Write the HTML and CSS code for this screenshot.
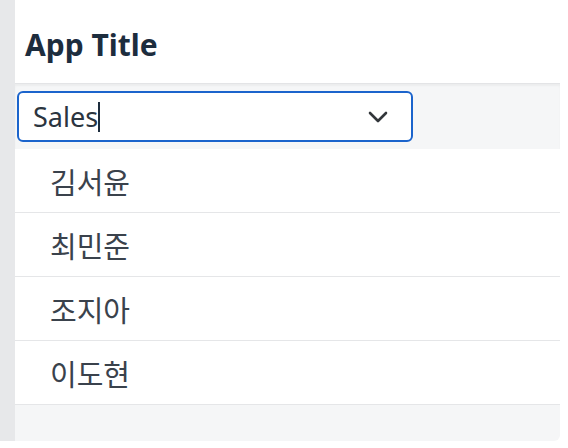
FILE: index.html
```html
<!DOCTYPE html>
<html lang="ko">
<head>
    <meta charset="UTF-8">
    <meta name="viewport" content="width=device-width, initial-scale=1.0">
    <title>App Title</title>
    <link rel="stylesheet" href="styles.css">
</head>
<body>
    <div class="shell">
        <div class="side"></div>
        <div class="panel">
            <header class="header">
                <h1 class="title">App Title</h1>
            </header>
            <div class="toolbar">
                <div class="select">
                    <span class="select-value">Sales<span class="caret"></span></span>
                    <svg class="chevron" width="20" height="12" viewBox="0 0 20 12">
                        <path d="M2 2 L10 10 L18 2" fill="none" stroke="#32363a" stroke-width="2.6" stroke-linecap="round" stroke-linejoin="round"/>
                    </svg>
                </div>
            </div>
            <ul class="list">
                <li class="item">김서윤</li>
                <li class="item">최민준</li>
                <li class="item">조지아</li>
                <li class="item">이도현</li>
            </ul>
            <div class="footer"></div>
        </div>
    </div>
</body>
</html>
```

FILE: styles.css
```css
body {
    margin: 0;
    background: #fff;
    font-family: 'Noto Sans', 'Noto Sans CJK KR', sans-serif;
    color: #32363a;
}
.shell {
    display: flex;
    width: 560px;
    height: 441px;
}
.side {
    width: 15px;
    background: #e7e8ea;
}
.panel {
    flex: 1;
    display: flex;
    flex-direction: column;
    background: #fff;
    border-bottom-right-radius: 6px;
    overflow: hidden;
}
.header {
    height: 84px;
    display: flex;
    align-items: center;
    padding: 5px 0 0 10px;
    box-sizing: border-box;
    border-bottom: 1px solid #e3e4e6;
}
.title {
    margin: 0;
    font-size: 30px;
    font-weight: 700;
    color: #1d2d3e;
}
.toolbar {
    height: 65px;
    background: #f5f6f7;
    padding: 7px 0 0 2px;
    box-sizing: border-box;
    box-shadow: inset 0 2px 2px rgba(0, 0, 0, 0.04);
}
.select {
    width: 396px;
    height: 51px;
    box-sizing: border-box;
    border: 2.5px solid #1b64cc;
    border-radius: 6px;
    background: #fff;
    display: flex;
    align-items: center;
    justify-content: space-between;
    padding: 0 23px 0 14px;
}
.select-value {
    font-size: 27px;
    display: flex;
    align-items: center;
    color: #2b3540;
}
.caret {
    display: inline-block;
    width: 2px;
    height: 30px;
    background: #1d2d3e;
}
.chevron {
    display: block;
}
.list {
    list-style: none;
    margin: 0;
    padding: 0;
    background: #fff;
}
.item {
    height: 64px;
    box-sizing: border-box;
    border-bottom: 1.5px solid #e5e6e8;
    padding-left: 35px;
    display: flex;
    align-items: center;
    font-size: 29px;
    color: #3a424c;
}
.footer {
    flex: 1;
    background: #f5f6f7;
}
```
